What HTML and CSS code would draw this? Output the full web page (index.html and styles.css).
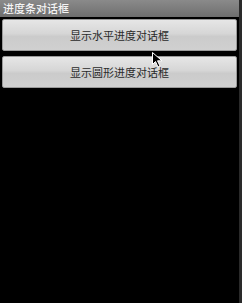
FILE: index.html
```html
<!DOCTYPE html>
<html lang="en">
<head>
    <meta charset="UTF-8">
    <meta name="viewport" content="width=device-width, initial-scale=1.0">
    <title>进度条对话框</title>
    <link rel="stylesheet" href="styles.css">
</head>
<body>
    <div class="screen">
        <div class="title-bar">进度条对话框</div>
        <div class="content">
            <button class="btn">显示水平进度对话框</button>
            <button class="btn">显示圆形进度对话框</button>
        </div>
    </div>
    <div class="edge"></div>

    <!-- mouse pointer captured in the screenshot -->
    <svg class="cursor" width="12" height="16" viewBox="0 0 12 16">
        <path d="M0.5 0.5 L0.5 12.5 L3.5 9.5 L6 15 L8 14 L5.5 8.8 L10 8.8 Z" fill="#000" stroke="#fff" stroke-width="1"/>
    </svg>
</body>
</html>
```

FILE: styles.css
```css
body {
    margin: 0;
    background: #000;
    font-family: "Noto Sans CJK SC", "Liberation Sans", sans-serif;
    width: 242px;
    height: 303px;
    display: flex;
    overflow: hidden;
    position: relative;
}

.screen {
    width: 239px;
    display: flex;
    flex-direction: column;
}

.edge {
    width: 3px;
    background: #2a2a2a;
}

.title-bar {
    height: 17px;
    line-height: 16px;
    padding-left: 3px;
    font-size: 11px;
    font-weight: 500;
    color: #f4f4f4;
    background: linear-gradient(to bottom, #8a8a8a 0%, #7a7a7a 60%, #6e6e6e 100%);
}

.content {
    display: flex;
    flex-direction: column;
    gap: 5px;
    padding: 2px 2px 0 2px;
}

.btn {
    height: 32px;
    padding: 0;
    font-family: inherit;
    font-size: 11px;
    color: #2a2a2a;
    border: 1px solid #9a9a9a;
    border-radius: 2px;
    background: linear-gradient(to bottom, #e6e6e6 0%, #d6d6d6 45%, #cbcbcb 55%, #d0d0d0 100%);
}

.cursor {
    position: absolute;
    left: 152px;
    top: 52px;
}
```
